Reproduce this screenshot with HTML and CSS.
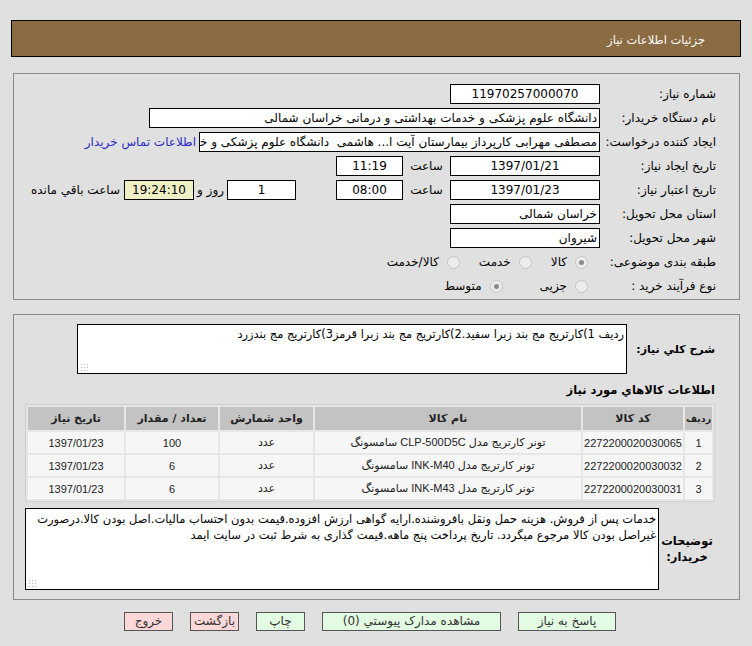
FILE: index.html
```html
<!DOCTYPE html>
<html lang="fa" dir="rtl">
<head>
<meta charset="utf-8">
<title>جزئیات اطلاعات نیاز</title>
<link rel="stylesheet" href="styles.css">
</head>
<body>
<div class="header"><span>جزئیات اطلاعات نیاز</span></div>

<div class="panel info">
  <div class="row">
    <div class="lbl">شماره نیاز:</div>
    <div class="box w150 center">11970257000070</div>
  </div>
  <div class="row">
    <div class="lbl">نام دستگاه خریدار:</div>
    <div class="box w450">دانشگاه علوم پزشکی و خدمات بهداشتی و درمانی خراسان شمالی</div>
  </div>
  <div class="row">
    <div class="lbl">ایجاد کننده درخواست:</div>
    <div class="box w400">مصطفی مهرابی کارپرداز بیمارستان آیت ا... هاشمی&nbsp; دانشگاه علوم پزشکی و خدمات بهداشتی درمانی خراسان شمالی</div>
    <a class="link" href="#">اطلاعات تماس خریدار</a>
  </div>
  <div class="row">
    <div class="lbl">تاریخ ایجاد نیاز:</div>
    <div class="box w150 center">1397/01/21</div>
    <span class="hour">ساعت</span>
    <div class="box w66 center">11:19</div>
  </div>
  <div class="row">
    <div class="lbl">تاریخ اعتبار نیاز:</div>
    <div class="box w150 center">1397/01/23</div>
    <span class="hour">ساعت</span>
    <div class="box w66 center">08:00</div>
    <div class="box w68 center days">1</div>
    <span class="daysword">روز و</span>
    <div class="box w69 center remain">19:24:10</div>
    <span class="remainword">ساعت باقي مانده</span>
  </div>
  <div class="row">
    <div class="lbl">استان محل تحویل:</div>
    <div class="box w150">خراسان شمالی</div>
  </div>
  <div class="row">
    <div class="lbl">شهر محل تحویل:</div>
    <div class="box w150">شیروان</div>
  </div>
  <div class="row">
    <div class="lbl">طبقه بندی موضوعی:</div>
    <div class="radios cat">
      <span class="opt"><span class="radio on"></span><span>کالا</span></span>
      <span class="opt"><span class="radio"></span><span>خدمت</span></span>
      <span class="opt"><span class="radio"></span><span>کالا/خدمت</span></span>
    </div>
  </div>
  <div class="row">
    <div class="lbl">نوع فرآیند خرید :</div>
    <div class="radios proc">
      <span class="opt"><span class="radio"></span><span>جزیی</span></span>
      <span class="opt"><span class="radio on"></span><span>متوسط</span></span>
    </div>
  </div>
</div>

<div class="panel details">
  <div class="descrow">
    <div class="blbl desclbl">شرح کلي نیاز:</div>
    <div class="area area1">ردیف 1)کارتریج مج بند زبرا سفید.2)کارتریج مج بند زبرا قرمز3)کارتریج مج بندزرد<span class="grip"></span></div>
  </div>
  <div class="blbl title">اطلاعات کالاهاي مورد نياز</div>
  <table class="items">
    <thead>
      <tr>
        <th class="c1">ردیف</th>
        <th class="c2">کد کالا</th>
        <th class="c3">نام کالا</th>
        <th class="c4">واحد شمارش</th>
        <th class="c5">تعداد / مقدار</th>
        <th class="c6">تاریخ نیاز</th>
      </tr>
    </thead>
    <tbody>
      <tr>
        <td>1</td><td>2272200020030065</td><td>تونر کارتریج مدل CLP-500D5C سامسونگ</td><td>عدد</td><td>100</td><td>1397/01/23</td>
      </tr>
      <tr>
        <td>2</td><td>2272200020030032</td><td>تونر کارتریج مدل INK-M40 سامسونگ</td><td>عدد</td><td>6</td><td>1397/01/23</td>
      </tr>
      <tr>
        <td>3</td><td>2272200020030031</td><td>تونر کارتریج مدل INK-M43 سامسونگ</td><td>عدد</td><td>6</td><td>1397/01/23</td>
      </tr>
    </tbody>
  </table>
  <div class="descrow notes">
    <div class="blbl noteslbl">توضیحات خریدار:</div>
    <div class="area area2">خدمات پس از فروش. هزینه حمل ونقل بافروشنده.ارایه گواهی ارزش افزوده.قیمت بدون احتساب مالیات.اصل بودن کالا.درصورت غیراصل بودن کالا مرجوع میگردد. تاریخ پرداخت پنج ماهه.قیمت گذاری به شرط ثبت در سایت ایمد<span class="grip"></span></div>
  </div>
</div>

<div class="buttons">
  <span class="btn green b98">پاسخ به نیاز</span>
  <span class="btn green b179">مشاهده مدارک پیوستي (0)</span>
  <span class="btn green b49">چاپ</span>
  <span class="btn pink b49">بازگشت</span>
  <span class="btn pink b49">خروج</span>
</div>
</body>
</html>
```

FILE: styles.css
```css
html, body {
  margin: 0;
  padding: 0;
}
body {
  background: #e0e0e0;
  font-family: "DejaVu Sans", sans-serif;
  font-size: 12px;
  color: #000;
  direction: rtl;
  width: 752px;
  height: 646px;
  overflow: hidden;
}

.header {
  margin: 20px 11px 0 11px;
  height: 35px;
  background: #8b6c42;
  border: 1px solid #000;
  color: #fff;
  display: flex;
  align-items: center;
  padding-right: 35px;
}
.header span {
  margin-top: 3px;
  font-size: 11.5px;
}

.panel {
  margin: 0 12px 0 13px;
  border: 1px solid #8a8a8a;
  box-sizing: border-box;
}
.info {
  margin-top: 16px;
  height: 227px;
  padding: 8px 23px 0 0;
}
.row {
  display: flex;
  align-items: center;
  height: 24px;
  white-space: nowrap;
}
.lbl {
  width: 116px;
  flex: none;
}
.box {
  box-sizing: border-box;
  height: 20px;
  line-height: 18px;
  border: 1px solid #000;
  background: #fff;
  padding: 0 2px;
  overflow: hidden;
  white-space: nowrap;
  flex: none;
}
.center { text-align: center; }
.w150 { width: 150px; }
.w450 { width: 451px; }
.w400 { width: 401px; }
.w66 { width: 67px; }
.w68 { width: 69px; }
.w69 { width: 70px; }
.link {
  color: #2b2bc4;
  text-decoration: none;
  margin-right: 3px;
}
.hour {
  width: 47px;
  text-align: center;
  flex: none;
}
.days { margin-right: 40px; }
.daysword {
  width: 33px;
  text-align: center;
  flex: none;
}
.remain { background: #efefc6; }
.remainword { margin-right: 4px; }

.radios {
  display: flex;
  align-items: center;
  padding-right: 12px;
}
.opt {
  display: flex;
  align-items: center;
  gap: 8px;
}
.cat .opt + .opt { margin-right: 19px; }
.proc .opt + .opt { margin-right: 37px; }
.radio {
  width: 11px;
  height: 11px;
  border-radius: 50%;
  border: 1px solid #c4c4c4;
  background: #ececec;
  box-sizing: content-box;
  position: relative;
  flex: none;
}
.radio.on::after {
  content: "";
  position: absolute;
  left: 3px;
  top: 3px;
  width: 5px;
  height: 5px;
  border-radius: 50%;
  background: #8a8a8a;
}

.details {
  margin-top: 14px;
  height: 286px;
  padding: 9px 24px 0 11px;
}
.blbl {
  font-weight: bold;
  font-size: 11.5px;
  white-space: nowrap;
}
.descrow {
  display: flex;
  align-items: center;
}
.desclbl {
  width: 88px;
  flex: none;
  font-size: 11px;
}
.area {
  box-sizing: border-box;
  border: 1px solid #000;
  background: #fff;
  padding: 1px 2px;
  position: relative;
  line-height: 16px;
}
.area1 {
  width: 550px;
  height: 50px;
  font-size: 11.4px;
}
.area2 {
  width: 635px;
  height: 82px;
  font-size: 11.5px;
  padding-top: 2px;
}
.grip {
  position: absolute;
  left: 2px;
  bottom: 2px;
  width: 8px;
  height: 8px;
  background-image: radial-gradient(circle, #b8b8b8 0.7px, transparent 0.9px);
  background-size: 3px 3px;
}
.title {
  margin-top: 8px;
  line-height: 16px;
}

.items {
  margin-top: 6px;
  width: 690px;
  table-layout: fixed;
  border-collapse: separate;
  border-spacing: 2px;
  border: 1px solid #d0d0d0;
  background: #e6e6e6;
  font-family: "Liberation Sans", "DejaVu Sans", sans-serif;
  font-size: 11px;
}
.items th {
  background: #c3c3c3;
  height: 23px;
  padding: 0;
  font-weight: bold;
  font-family: "DejaVu Sans", sans-serif;
  font-size: 11px;
  color: #222;
  white-space: nowrap;
  overflow: visible;
}
.items th.c1 {
  font-size: 9.5px;
}
.items td {
  background: #f6f6f6;
  height: 21px;
  padding: 0;
  text-align: center;
  color: #222;
  white-space: nowrap;
}
.c1 { width: 27px; }
.c2 { width: 100px; }
.c3 { width: 266px; }
.c4 { width: 93px; }
.c5 { width: 92px; }
.c6 { width: 96px; }

.notes {
  margin-top: 6px;
}
.noteslbl {
  width: 56px;
  text-align: center;
  flex: none;
  line-height: 16px;
  white-space: normal;
}

.buttons {
  display: flex;
  justify-content: center;
  gap: 17px;
  margin-top: 12px;
  padding-right: 12px;
}
.btn {
  box-sizing: border-box;
  height: 19px;
  line-height: 17px;
  border: 1px solid #555;
  text-align: center;
  color: #333;
  white-space: nowrap;
}
.green { background: #e2fbe2; }
.pink { background: #fcd8d8; }
.b98 { width: 98px; }
.b179 { width: 179px; }
.b49 { width: 49px; }
```
